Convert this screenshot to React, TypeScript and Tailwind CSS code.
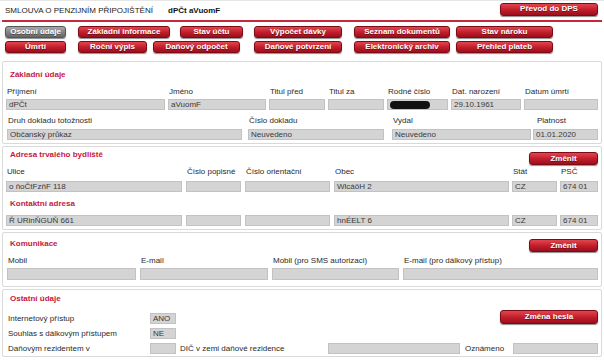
import React from "react";

const redBtn =
  "bg-linear-to-b from-[#e0454f] via-[#c41f2c] to-[#9c0e1c] border border-[#7d0a15] shadow-[0_1px_1px_rgba(0,0,0,0.45)]";
const grayBtn =
  "bg-linear-to-b from-[#a8a8a8] via-[#858585] to-[#666666] border border-[#555] shadow-[0_1px_1px_rgba(0,0,0,0.45)]";

const Btn = ({ label, className, gray }: { label: string; className: string; gray?: boolean }) => (
  <div
    className={`${className} ${gray ? grayBtn : redBtn} rounded-[3px] text-white font-bold text-[8px] flex items-center justify-center [text-shadow:0_1px_0_rgba(0,0,0,0.4)]`}
  >
    {label}
  </div>
);

const Input = ({ value, className }: { value?: React.ReactNode; className: string }) => (
  <div
    className={`${className} bg-[#d4d4d4] border border-[#c2c2c2] text-[8px] leading-[9px] text-[#3a3a3a] pl-[2px] flex items-center overflow-hidden whitespace-nowrap`}
  >
    {value}
  </div>
);

const Field = ({
  label,
  value,
  w,
  gap = "mt-[2px]",
  h = "h-[11px]",
  lpad = "pl-[1px]",
}: {
  label: string;
  value?: React.ReactNode;
  w: string;
  gap?: string;
  h?: string;
  lpad?: string;
}) => (
  <div className={`${w} flex flex-col`}>
    <div className={`${lpad} text-[8px] leading-[10px] h-[10px] text-[#2a2a2a] whitespace-nowrap`}>{label}</div>
    <Input value={value} className={`${gap} ${h} w-full`} />
  </div>
);

const Heading = ({ text, className = "" }: { text: string; className?: string }) => (
  <div className={`${className} pl-[4px] text-[8px] leading-[10px] font-bold text-[#c5173f]`}>{text}</div>
);

const Box = ({ className, children }: { className: string; children: React.ReactNode }) => (
  <div className={`${className} mx-[2px] border border-[#d9d9d9] rounded-[2px] px-[3px] bg-white`}>{children}</div>
);

const row1 = [
  { l: "Osobní údaje", c: "ml-[5px] w-[61px]", gray: true },
  { l: "Základní informace", c: "ml-[12px] w-[92px]" },
  { l: "Stav účtu", c: "ml-[10px] w-[63px]" },
  { l: "Výpočet dávky", c: "ml-[11px] w-[88px]" },
  { l: "Seznam dokumentů", c: "ml-[12px] w-[96px]" },
  { l: "Stav nároku", c: "ml-[6px] w-[97px]" },
];

const row2 = [
  { l: "Úmrtí", c: "ml-[5px] w-[61px]" },
  { l: "Roční výpis", c: "ml-[12px] w-[69px]" },
  { l: "Daňový odpočet", c: "ml-[6px] w-[87px]" },
  { l: "Daňové potvrzení", c: "ml-[14px] w-[88px]" },
  { l: "Elektronický archiv", c: "ml-[12px] w-[96px]" },
  { l: "Přehled plateb", c: "ml-[6px] w-[97px]" },
];

const Redacted = () => <div className="w-[40px] h-[8px] rounded-full bg-[#111]" />;

export default function App() {
  return (
    <div className="w-[604px] h-[362px] overflow-hidden bg-white font-['Liberation_Sans',Arial,sans-serif] text-[#222]">
      {/* header */}
      <div className="h-[20px] flex items-center pl-[5px] pr-[6px] border-t border-[#e6e6e6]">
        <span className="text-[8px] text-[#222] w-[163px]">SMLOUVA O PENZIJNÍM PŘIPOJIŠTĚNÍ</span>
        <span className="text-[8px] font-bold text-[#111]">dPČt aVuomF</span>
        <div className="flex-1" />
        <Btn label="Převod do DPS" className="w-[98px] h-[13px] -mt-[3px]" />
      </div>
      <div className="mx-[2px] h-[2px] bg-[#c4283a]" />

      {/* tabs */}
      <div className="flex mt-[4px]">
        {row1.map((b) => (
          <Btn key={b.l} label={b.l} className={`${b.c} h-[12px]`} gray={b.gray} />
        ))}
      </div>
      <div className="flex mt-[3px]">
        {row2.map((b) => (
          <Btn key={b.l} label={b.l} className={`${b.c} h-[12px]`} />
        ))}
      </div>

      {/* Základní údaje */}
      <Box className="mt-[8px] pt-[8px] pb-[3px]">
        <Heading text="Základní údaje" />
        <div className="mt-[7px] grid grid-cols-[159px_98px_56px_56px_61px_70px_74px] gap-x-[3px]">
          <Field label="Příjmení" value="dPČt" w="w-full" />
          <Field label="Jméno" value="aVuomF" w="w-full" />
          <Field label="Titul před" w="w-full" />
          <Field label="Titul za" w="w-full" />
          <Field label="Rodné číslo" value={<Redacted />} w="w-full" />
          <Field label="Dat. narození" value="29.10.1961" w="w-full" />
          <Field label="Datum úmrtí" w="w-full" />
        </div>
        <div className="mt-[6px] flex">
          <Field label="Druh dokladu totožnosti" value="Občanský průkaz" w="ml-[1px] w-[235px]" gap="mt-[3px]" />
          <Field label="Číslo dokladu" value="Neuvedeno" w="ml-[6px] w-[136px]" gap="mt-[3px]" />
          <Field label="Vydal" value="Neuvedeno" w="ml-[8px] w-[139px]" gap="mt-[3px]" />
          <Field label="Platnost" value="01.01.2020" w="ml-[2px] w-[65px]" gap="mt-[3px]" lpad="pl-[4px]" />
        </div>
      </Box>

      {/* Adresa */}
      <Box className="mt-[2px] pt-[3px] pb-[3px]">
        <div className="flex items-start justify-between">
          <Heading text="Adresa trvalého bydliště" />
          <Btn label="Změnit" className="mt-[2px] w-[69px] h-[13px]" />
        </div>
        <div className="mt-[2px] grid grid-cols-[176px_55px_85px_175px_45px_38px] [column-gap:4px]">
          <Field label="Ulice" value="o ňoČtFzňF 118" w="w-full" gap="mt-[4px]" />
          <Field label="Číslo popisné" w="w-full" gap="mt-[4px]" />
          <Field label="Číslo orientační" w="w-full" gap="mt-[4px]" />
          <Field label="Obec" value="WlcáöH 2" w="w-full" gap="mt-[4px]" />
          <Field label="Stát" value="CZ" w="w-[45px] -ml-[1px]" gap="mt-[4px]" />
          <Field label="PSČ" value="674 01" w="w-[38px] -ml-[2px]" gap="mt-[4px]" />
        </div>
        <Heading text="Kontaktní adresa" className="mt-[7px]" />
        <div className="mt-[6px] grid grid-cols-[176px_55px_85px_175px_45px_38px] [column-gap:4px]">
          <Input value="Ř URinŇGUŇ 661" className="h-[11px]" />
          <Input className="h-[11px]" />
          <Input className="h-[11px]" />
          <Input value="hnÉELT 6" className="h-[11px]" />
          <Input value="CZ" className="h-[11px] w-[45px] -ml-[1px]" />
          <Input value="674 01" className="h-[11px] w-[38px] -ml-[2px]" />
        </div>
      </Box>

      {/* Komunikace */}
      <Box className="mt-[2px] pt-[6px] pb-[6px]">
        <div className="flex items-start justify-between">
          <Heading text="Komunikace" />
          <Btn label="Změnit" className="w-[69px] h-[13px]" />
        </div>
        <div className="mt-[4px] flex">
          <Field label="Mobil" w="ml-[1px] w-[129px]" h="h-[12px]" />
          <Field label="E-mail" w="ml-[4px] w-[128px]" h="h-[12px]" />
          <Field label="Mobil (pro SMS autorizaci)" w="ml-[4px] w-[127px]" h="h-[12px]" />
          <Field label="E-mail (pro dálkový přístup)" w="ml-[4px] w-[195px]" h="h-[12px]" />
        </div>
      </Box>

      {/* Ostatní údaje */}
      <Box className="mt-[2px] pt-[4px] pb-[2px]">
        <Heading text="Ostatní údaje" />
        <div className="mt-[6px] flex items-end">
          <div className="w-[144px] pl-[2px] text-[8px] leading-[11px] h-[11px] text-[#2a2a2a]">Internetový přístup</div>
          <Input value="ANO" className="w-[26px] h-[11px]" />
          <div className="flex-1" />
          <Btn label="Změna hesla" className="w-[98px] h-[14px]" />
        </div>
        <div className="mt-[4px] flex items-center">
          <div className="w-[144px] pl-[2px] text-[8px] leading-[11px] text-[#2a2a2a]">Souhlas s dálkovým přístupem</div>
          <Input value="NE" className="w-[26px] h-[11px]" />
        </div>
        <div className="mt-[4px] flex items-center">
          <div className="w-[144px] pl-[2px] text-[8px] leading-[11px] text-[#2a2a2a]">Daňovým rezidentem v</div>
          <Input className="w-[26px] h-[11px]" />
          <div className="ml-[4px] w-[148px] text-[8px] leading-[11px] text-[#2a2a2a]">DIČ v zemi daňové rezidence</div>
          <Input className="w-[132px] h-[11px]" />
          <div className="w-[53px] pl-[5px] text-[8px] leading-[11px] text-[#2a2a2a]">Oznámeno</div>
          <Input className="w-[85px] h-[11px]" />
        </div>
      </Box>
    </div>
  );
}
